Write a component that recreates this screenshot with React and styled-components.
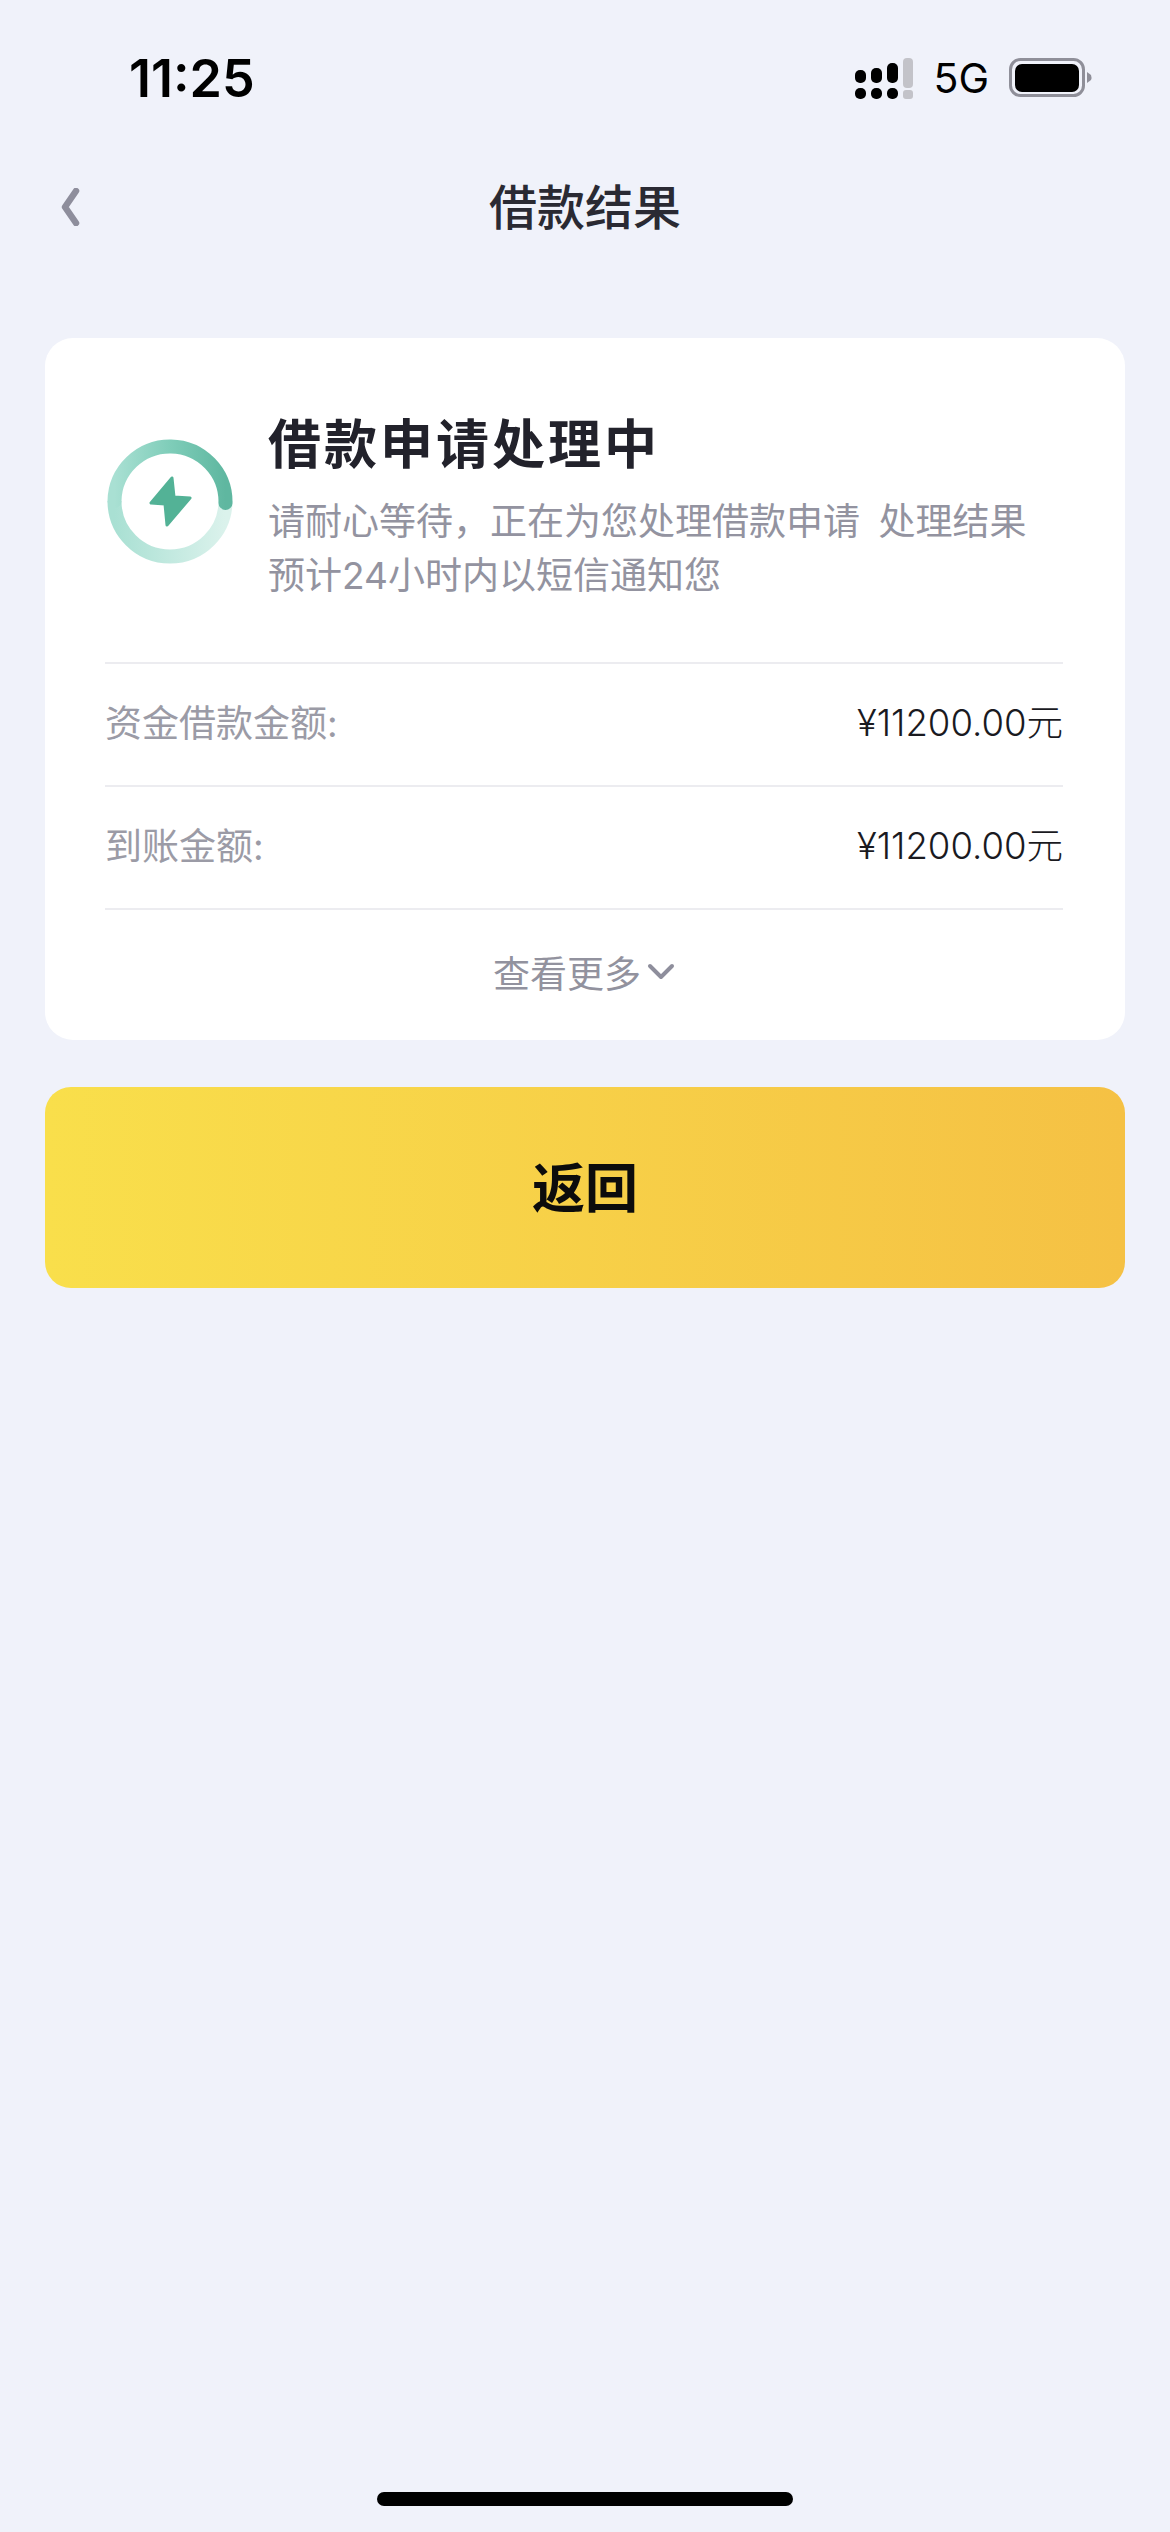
import styled, { createGlobalStyle } from "styled-components";

const GlobalStyle = createGlobalStyle`
  html, body {
    margin: 0;
    padding: 0;
    background: #f0f2fa;
  }
  * {
    box-sizing: border-box;
  }
`;

const FONT = `Inter, "Noto Sans CJK SC", sans-serif`;

function SignalIcon() {
  return (
    <svg width="60" height="43" viewBox="0 0 60 43">
      <rect x="0" y="13" width="11" height="13" rx="5" fill="#000" />
      <rect x="16" y="11" width="11" height="15" rx="5" fill="#000" />
      <rect x="32" y="6" width="11" height="20" rx="5" fill="#000" />
      <rect x="48" y="1" width="10" height="30" rx="4" fill="#c3c3c9" />
      <rect x="0" y="31" width="11" height="11" rx="5" fill="#000" />
      <rect x="16" y="31" width="11" height="11" rx="5" fill="#000" />
      <rect x="32" y="31" width="11" height="11" rx="5" fill="#000" />
      <rect x="48" y="33" width="10" height="9" rx="3" fill="#c3c3c9" />
    </svg>
  );
}

function BatteryIcon() {
  return (
    <svg width="83" height="40" viewBox="0 0 83 40">
      <rect x="1.5" y="1.5" width="73" height="36" rx="10" fill="none" stroke="#8f8f99" strokeWidth="3" />
      <rect x="6" y="6" width="64" height="28" rx="7" fill="#000" />
      <path d="M78 14 L82 17 Q83 19.5 82 22 L78 25 Z" fill="#8f8f99" />
    </svg>
  );
}

function BackIcon() {
  return (
    <svg width="20" height="38" viewBox="0 0 20 38">
      <path d="M16 3 L5 19 L16 35" fill="none" stroke="#8e8e9c" strokeWidth="6.5" strokeLinecap="round" strokeLinejoin="round" />
    </svg>
  );
}

function ProgressRing() {
  return (
    <svg width="126" height="126" viewBox="17 18 126 126">
      <defs>
        <linearGradient id="ringTop" x1="0" y1="0" x2="1" y2="0">
          <stop offset="0" stopColor="#a9e0d3" />
          <stop offset="0.5" stopColor="#7fcdb9" />
          <stop offset="1" stopColor="#5fb7a0" />
        </linearGradient>
        <linearGradient id="ringBottom" x1="0" y1="0" x2="1" y2="0">
          <stop offset="0" stopColor="#a9e0d3" />
          <stop offset="1" stopColor="#dbf2ec" />
        </linearGradient>
      </defs>
      <path d="M24.5 81 A55.5 55.5 0 0 0 135.5 81" fill="none" stroke="url(#ringBottom)" strokeWidth="14" />
      <path d="M24.5 81 A55.5 55.5 0 0 1 135.5 83" fill="none" stroke="url(#ringTop)" strokeWidth="14" strokeLinecap="round" />
      <path d="M82 58 L61 83 L75 84 L77 105 L100 78 L84 77 Z" fill="#53b296" stroke="#53b296" strokeWidth="3" strokeLinejoin="round" />
    </svg>
  );
}

function ChevronDown() {
  return (
    <svg width="28" height="18" viewBox="0 0 28 18">
      <path d="M3 3 L14 14 L25 3" fill="none" stroke="#8e8e9c" strokeWidth="4" strokeLinecap="round" strokeLinejoin="round" />
    </svg>
  );
}

const details = [
  { label: "资金借款金额:", value: "¥11200.00元" },
  { label: "到账金额:", value: "¥11200.00元" },
];

export default function App() {
  return (
    <>
      <GlobalStyle />
      <Page>
        <StatusBar>
          <Time>11:25</Time>
          <StatusRight>
            <SignalIcon />
            <Network>5G</Network>
            <BatteryIcon />
          </StatusRight>
        </StatusBar>
        <NavBar>
          <BackButton>
            <BackIcon />
          </BackButton>
          <NavTitle>借款结果</NavTitle>
        </NavBar>
        <Content>
          <Card>
            <Header>
              <RingBox>
                <ProgressRing />
              </RingBox>
              <HeaderText>
                <Title>借款申请处理中</Title>
                <Subtitle>
                  请耐心等待，正在为您处理借款申请 处理结果
                  <br />
                  预计24小时内以短信通知您
                </Subtitle>
              </HeaderText>
            </Header>
            {details.map((d) => (
              <Row key={d.label}>
                <RowLabel>{d.label}</RowLabel>
                <RowValue>{d.value}</RowValue>
              </Row>
            ))}
            <More>
              查看更多
              <ChevronDown />
            </More>
          </Card>
          <ReturnButton>返回</ReturnButton>
        </Content>
        <HomeBar />
      </Page>
    </>
  );
}

const Page = styled.div`
  display: flex;
  flex-direction: column;
  width: 1170px;
  height: 2532px;
  overflow: hidden;
  background: #f0f2fa;
  font-family: ${FONT};
`;

const StatusBar = styled.div`
  display: flex;
  justify-content: space-between;
  align-items: center;
  height: 156px;
  padding: 0 78px 0 129px;
`;

const Time = styled.div`
  font-size: 52px;
  font-weight: 600;
  color: #000;
`;

const StatusRight = styled.div`
  display: flex;
  align-items: center;
`;

const Network = styled.div`
  margin: 0 20px 0 18px;
  font-size: 41px;
  font-weight: 400;
  color: #000;
`;

const NavBar = styled.div`
  display: grid;
  grid-template-columns: 1fr auto 1fr;
  align-items: center;
  height: 102px;
  padding: 0 60px;
`;

const BackButton = styled.div`
  display: flex;
  align-items: center;
`;

const NavTitle = styled.div`
  padding-bottom: 6px;
  font-size: 48px;
  font-weight: 500;
  color: #2a2a33;
`;

const Content = styled.div`
  display: flex;
  flex-direction: column;
  gap: 47px;
  padding: 80px 45px 0;
`;

const Card = styled.div`
  padding: 0 62px 0 60px;
  background: #fff;
  border-radius: 28px;
`;

const Header = styled.div`
  display: flex;
  gap: 35px;
  padding: 72px 0 59px 2px;
`;

const RingBox = styled.div`
  flex: none;
  margin-top: 28px;
  height: 126px;
`;

const HeaderText = styled.div`
  display: flex;
  flex-direction: column;
  gap: 15px;
`;

const Title = styled.div`
  font-size: 53px;
  line-height: 70px;
  font-weight: 700;
  letter-spacing: 3px;
  color: #22222b;
`;

const Subtitle = styled.div`
  font-size: 37px;
  line-height: 54px;
  font-weight: 400;
  word-spacing: 8px;
  color: #9393a0;
  white-space: nowrap;
`;

const Row = styled.div`
  display: flex;
  justify-content: space-between;
  align-items: center;
  height: 123px;
  padding-bottom: 8px;
  border-top: 2px solid #ececf0;
`;

const RowLabel = styled.div`
  font-size: 37px;
  color: #9b9ba6;
`;

const RowValue = styled.div`
  font-size: 36.5px;
  font-weight: 300;
  color: #1a1a1f;
`;

const More = styled.div`
  display: flex;
  justify-content: center;
  align-items: center;
  gap: 6px;
  height: 132px;
  padding-bottom: 6px;
  border-top: 2px solid #ececf0;
  font-size: 37px;
  color: #92929e;
`;

const ReturnButton = styled.div`
  display: flex;
  justify-content: center;
  align-items: center;
  height: 201px;
  padding-bottom: 6px;
  border-radius: 26px;
  background: linear-gradient(90deg, #f9df4b, #f5c144);
  font-size: 53px;
  font-weight: 700;
  color: #0c0c0c;
`;

const HomeBar = styled.div`
  align-self: center;
  width: 416px;
  height: 14px;
  margin-top: auto;
  margin-bottom: 26px;
  border-radius: 7px;
  background: #000;
`;
